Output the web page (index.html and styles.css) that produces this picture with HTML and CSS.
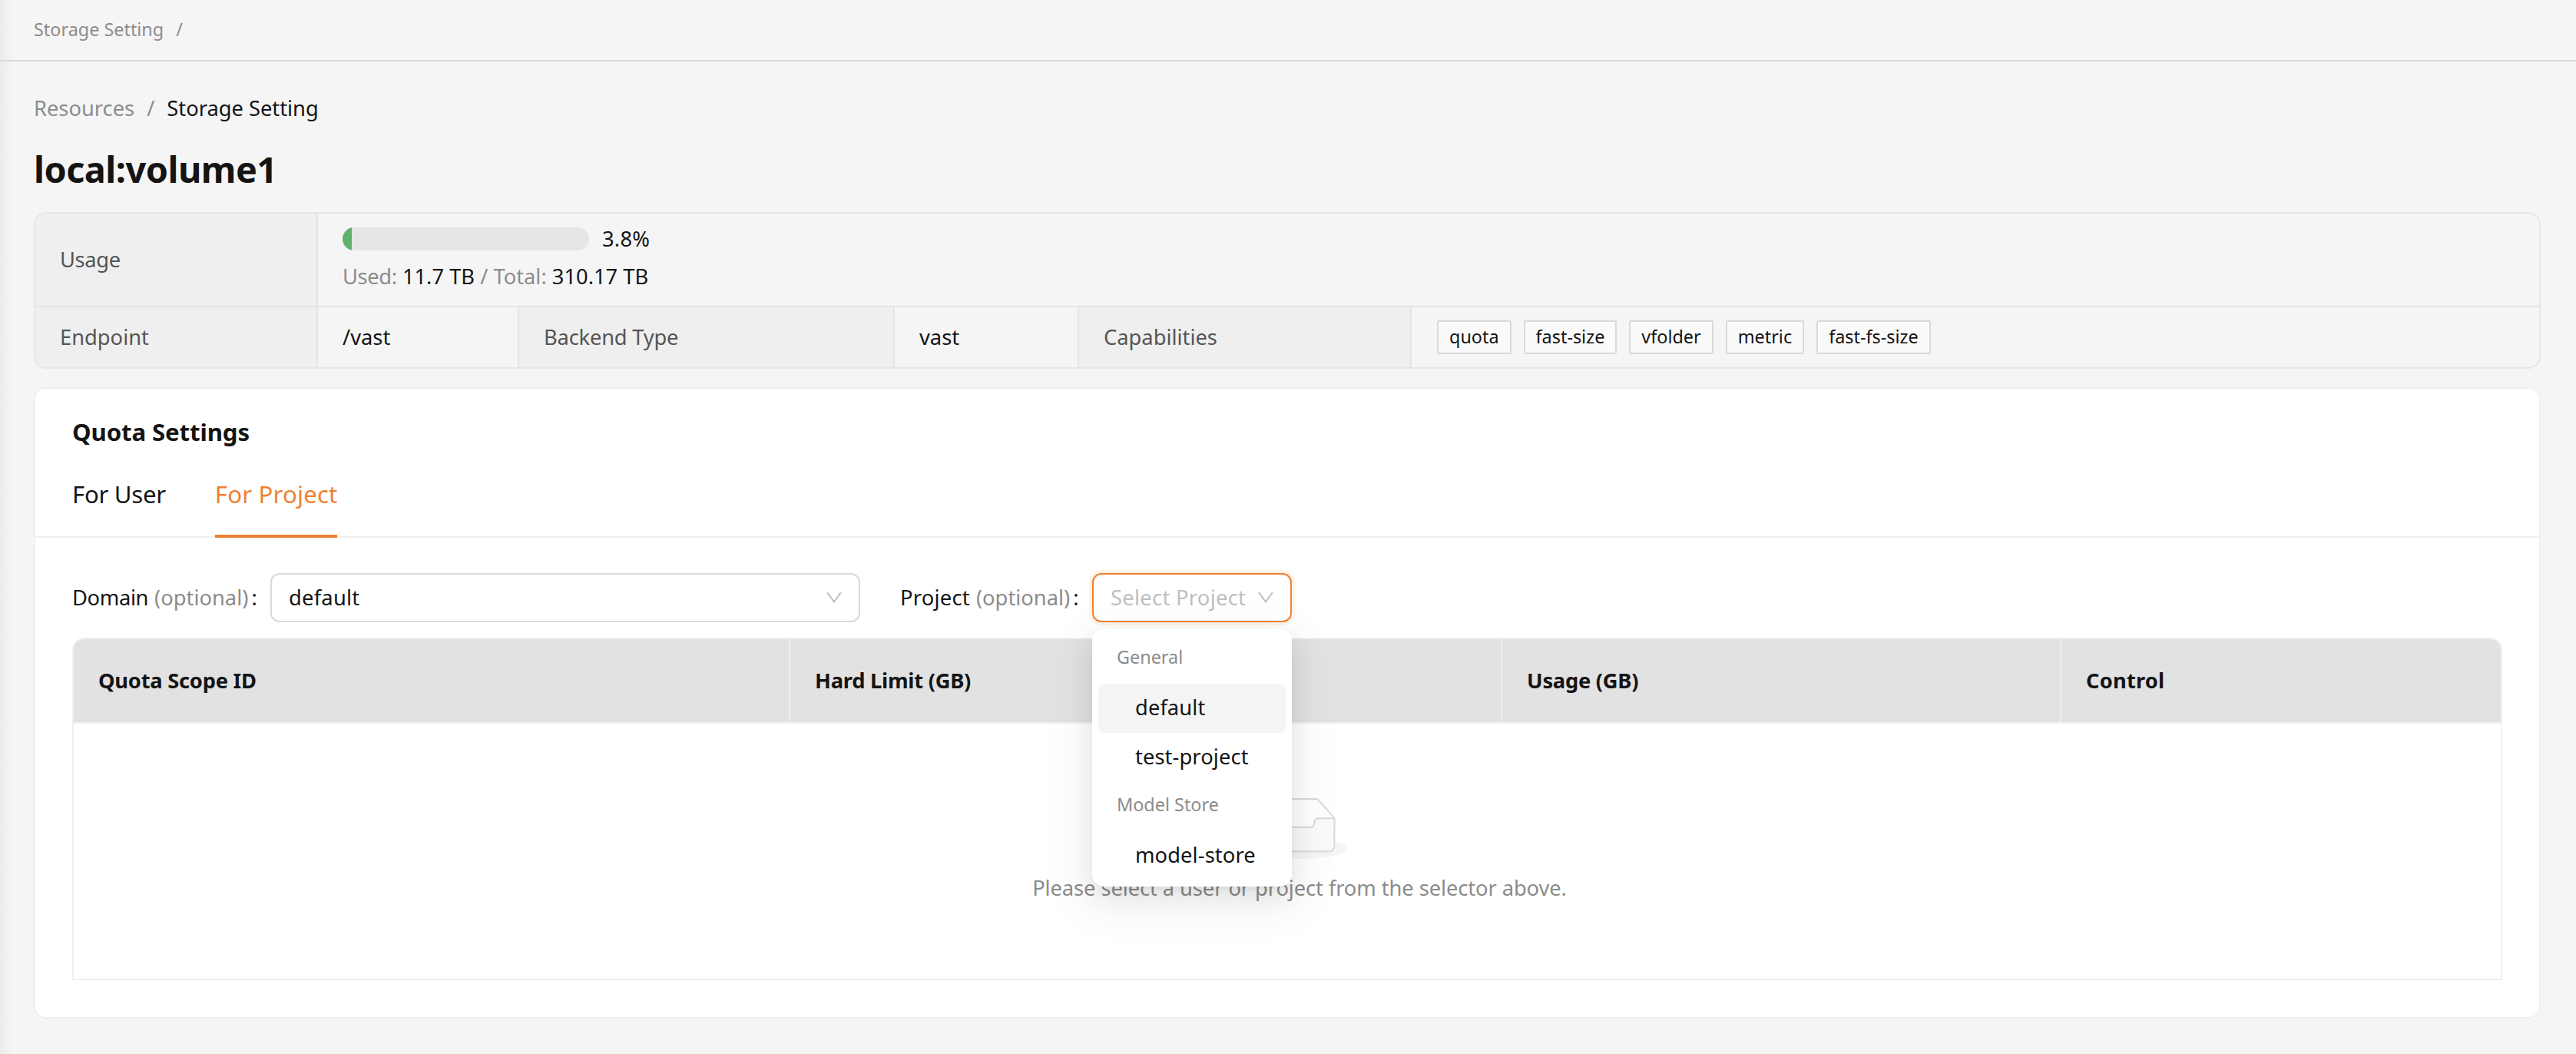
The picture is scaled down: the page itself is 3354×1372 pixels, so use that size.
FILE: index.html
```html
<!DOCTYPE html>
<html lang="en">
<head>
    <meta charset="UTF-8">
    <title>Storage Setting</title>
    <link rel="stylesheet" href="styles.css">
</head>
<body>
    <header class="topbar">
        <span>Storage Setting</span>
        <span class="slash">/</span>
    </header>

    <main class="content">
        <nav class="breadcrumb">
            <span>Resources</span>
            <span class="slash">/</span>
            <span class="current">Storage Setting</span>
        </nav>
        <h1>local:volume1</h1>

        <section class="desc">
            <div class="desc-row usage-row">
                <div class="label tight">Usage</div>
                <div class="value usage">
                    <div class="progress">
                        <div class="track"><div class="fill" style="width: 3.8%"></div></div>
                        <span class="wide">3.8%</span>
                    </div>
                    <div class="used"><span class="muted tight">Used:</span> 11.7 TB <span class="muted">/ Total:</span> 310.17 TB</div>
                </div>
            </div>
            <div class="desc-row info-row">
                <div class="label">Endpoint</div>
                <div class="value">/vast</div>
                <div class="label backend">Backend Type</div>
                <div class="value">vast</div>
                <div class="label">Capabilities</div>
                <div class="value tags">
                    <span class="tag">quota</span>
                    <span class="tag">fast-size</span>
                    <span class="tag">vfolder</span>
                    <span class="tag">metric</span>
                    <span class="tag">fast-fs-size</span>
                </div>
            </div>
        </section>

        <section class="card">
            <h2>Quota Settings</h2>
            <div class="tabs">
                <div class="tab">For User</div>
                <div class="tab active">For Project</div>
            </div>

            <div class="card-body">
                <form class="filters">
                    <div class="form-label domain-label">
                        <span class="tight">Domain</span>
                        <span class="muted">(optional)</span>
                        <span class="colon">:</span>
                    </div>
                    <div class="select domain-select">
                        <span class="wide">default</span>
                        <svg class="arrow" viewBox="131 256 762 512"><path d="M884 256h-75c-5.1 0-9.9 2.5-12.9 6.6L512 654.2 227.9 262.6c-3-4.1-7.8-6.6-12.9-6.6h-75c-6.5 0-10.3 7.4-6.5 12.7l352.6 486.1c12.8 17.6 39 17.6 51.7 0l352.6-486.1c3.9-5.3.1-12.7-6.4-12.7z"/></svg>
                    </div>
                    <div class="form-label project-label">
                        <span class="wide">Project</span>
                        <span class="muted">(optional)</span>
                        <span class="colon">:</span>
                    </div>
                    <div class="select project-select">
                        <span class="placeholder">Select Project</span>
                        <svg class="arrow" viewBox="131 256 762 512"><path d="M884 256h-75c-5.1 0-9.9 2.5-12.9 6.6L512 654.2 227.9 262.6c-3-4.1-7.8-6.6-12.9-6.6h-75c-6.5 0-10.3 7.4-6.5 12.7l352.6 486.1c12.8 17.6 39 17.6 51.7 0l352.6-486.1c3.9-5.3.1-12.7-6.4-12.7z"/></svg>
                        <div class="dropdown">
                            <div class="group">General</div>
                            <div class="option selected">default</div>
                            <div class="option">test-project</div>
                            <div class="group">Model Store</div>
                            <div class="option">model-store</div>
                        </div>
                    </div>
                </form>

                <div class="table">
                    <div class="thead">
                        <div class="th">Quota Scope ID</div>
                        <div class="th">Hard Limit (GB)</div>
                        <div class="th">Usage (GB)</div>
                        <div class="th control">Control</div>
                    </div>
                    <div class="empty">
                        <svg width="125" height="80" viewBox="0 0 64 41">
                            <g transform="translate(0 1)" fill="none" fill-rule="evenodd">
                                <ellipse fill="#f5f5f5" cx="32" cy="33" rx="32" ry="7"/>
                                <g fill-rule="nonzero" stroke="#d9d9d9">
                                    <path d="M55 12.76L44.854 1.258C44.367.474 43.656 0 42.907 0H21.093c-.749 0-1.46.474-1.947 1.257L9 12.761V22h46v-9.24z"/>
                                    <path fill="#fafafa" d="M41.613 15.931c0-1.605.994-2.93 2.227-2.931H55v18.137C55 33.26 53.68 35 52.05 35h-40.1C10.32 35 9 33.259 9 31.137V13h11.16c1.233 0 2.227 1.323 2.227 2.928v.022c0 1.605 1.005 2.901 2.237 2.901h14.752c1.232 0 2.237-1.308 2.237-2.913v-.007z"/>
                                </g>
                            </g>
                        </svg>
                        <p>Please select a user or project from the selector above.</p>
                    </div>
                </div>
            </div>
        </section>
    </main>
</body>
</html>
```
FILE: styles.css
```css
* {
    box-sizing: border-box;
}

body {
    margin: 0;
    height: 1372px;
    overflow: hidden;
    background: linear-gradient(to right, #ebebeb 0, #f1f1f1 8px, #f5f5f5 18px);
    font-family: "Noto Sans", sans-serif;
    font-size: 27.3px;
    line-height: 44px;
    color: #141414;
}

h1, h2, p {
    margin: 0;
}

.muted {
    color: #8c8c8c;
}

.wide {
    letter-spacing: 0.25px;
}

.tight {
    letter-spacing: -0.35px;
}

.slash {
    margin: 0 16px;
}

.topbar {
    display: flex;
    align-items: center;
    height: 80px;
    padding: 0 44px 2px;
    border-bottom: 2px solid #d9d9d9;
    font-size: 23.4px;
    color: #8c8c8c;
}

.content {
    padding: 39px 46px 0 44px;
}

.breadcrumb {
    display: flex;
    height: 44px;
    color: #8c8c8c;
}

.breadcrumb .current {
    color: #141414;
}

h1 {
    margin: 27px 0 26px;
    font-size: 46.8px;
    line-height: 60px;
    letter-spacing: -0.5px;
}

/* volume summary */
.desc {
    height: 204px;
    border: 2px solid #e6e6e6;
    border-radius: 16px;
    overflow: hidden;
}

.desc-row {
    display: grid;
}

.usage-row {
    grid-template-columns: 368px 1fr;
    height: 122px;
    border-bottom: 2px solid #e4e4e4;
}

.info-row {
    grid-template-columns: 368px 262px 489px 240px 433px 1fr;
    height: 78px;
}

.label, .value {
    display: flex;
    align-items: center;
    padding: 0 32px;
    border-right: 2px solid #e4e4e4;
}

.value:last-child {
    border-right: none;
}

.label {
    background: #efefef;
    color: #555;
}

.backend {
    letter-spacing: -0.2px;
}

.usage {
    flex-direction: column;
    align-items: flex-start;
    justify-content: center;
    gap: 5px;
    padding-bottom: 6px;
}

.progress {
    display: flex;
    align-items: center;
    gap: 17px;
}

.track {
    width: 321px;
    height: 30px;
    border-radius: 15px;
    background: #e6e6e6;
    overflow: hidden;
}

.fill {
    height: 100%;
    background: #60b16c;
}

.value.tags {
    gap: 16px;
    padding-left: 33px;
}

.tag {
    height: 44px;
    padding: 0 14px;
    border: 2px solid #d9d9d9;
    border-radius: 2px;
    background: #fafafa;
    font-size: 23.4px;
    line-height: 38px;
}

/* quota card */
.card {
    margin-top: 24px;
    height: 822px;
    border: 2px solid #f0f0f0;
    border-radius: 16px;
    background: #fff;
}

h2 {
    padding: 32px 48px 0;
    font-size: 31.2px;
    line-height: 48px;
    letter-spacing: -0.12px;
}

.tabs {
    display: flex;
    gap: 64px;
    height: 114px;
    padding: 33px 48px 0;
    box-shadow: inset 0 -2px #f0f0f0;
    font-size: 31.2px;
    line-height: 48px;
}

.tab {
    letter-spacing: -0.3px;
}

.tab.active {
    border-bottom: 4px solid #ee8133;
    color: #ee8133;
    letter-spacing: 0.15px;
}

.card-body {
    padding: 46px 48px;
}

.filters {
    display: flex;
    align-items: center;
    height: 64px;
}

.form-label {
    display: flex;
    gap: 8px;
}

.colon {
    margin-left: -4px;
}

.domain-label {
    width: 258px;
}

.project-label {
    width: 250px;
    margin-left: 52px;
}

.select {
    position: relative;
    display: flex;
    align-items: center;
    justify-content: space-between;
    height: 64px;
    padding: 0 22px;
    border: 2px solid #d9d9d9;
    border-radius: 12px;
    background: #fff;
}

.domain-select {
    width: 768px;
}

.project-select {
    width: 260px;
    border-color: #ee8133;
    box-shadow: 0 0 0 4px #fff4e8;
}

.placeholder {
    color: #bfbfbf;
    letter-spacing: 0.3px;
}

.arrow {
    width: 20px;
    height: 14px;
    fill: #bfbfbf;
}

.dropdown {
    position: absolute;
    top: 70px;
    left: -2px;
    z-index: 10;
    width: 260px;
    padding: 8px;
    border-radius: 16px;
    background: #fff;
    box-shadow: 0 12px 32px rgba(0, 0, 0, 0.08), 0 6px 12px -8px rgba(0, 0, 0, 0.12), 0 18px 56px 16px rgba(0, 0, 0, 0.05);
}

.group {
    height: 64px;
    padding: 0 24px;
    font-size: 23.4px;
    line-height: 58px;
    color: #8c8c8c;
}

.option {
    height: 64px;
    padding: 0 48px;
    border-radius: 8px;
    line-height: 62px;
    letter-spacing: 0.1px;
    white-space: nowrap;
}

.option.selected {
    background: #f5f5f5;
}

/* quota table */
.table {
    height: 446px;
    margin-top: 20px;
    border: 2px solid #f0f0f0;
    border-radius: 16px 16px 0 0;
    overflow: hidden;
}

.thead {
    display: grid;
    grid-template-columns: 933px 927px 728px 1fr;
    height: 110px;
    border-bottom: 2px solid #f0f0f0;
    background: #e2e2e2;
    font-weight: 700;
    letter-spacing: -0.25px;
}

.th {
    padding: 0 32px;
    border-right: 2px solid #f0f0f0;
    line-height: 107px;
}

.th:last-child {
    border-right: none;
}

.control {
    letter-spacing: 0.2px;
}

.empty {
    display: flex;
    flex-direction: column;
    align-items: center;
    gap: 16px;
    padding: 96px 0 0 32px;
    color: #8c8c8c;
    letter-spacing: -0.08px;
}
```
